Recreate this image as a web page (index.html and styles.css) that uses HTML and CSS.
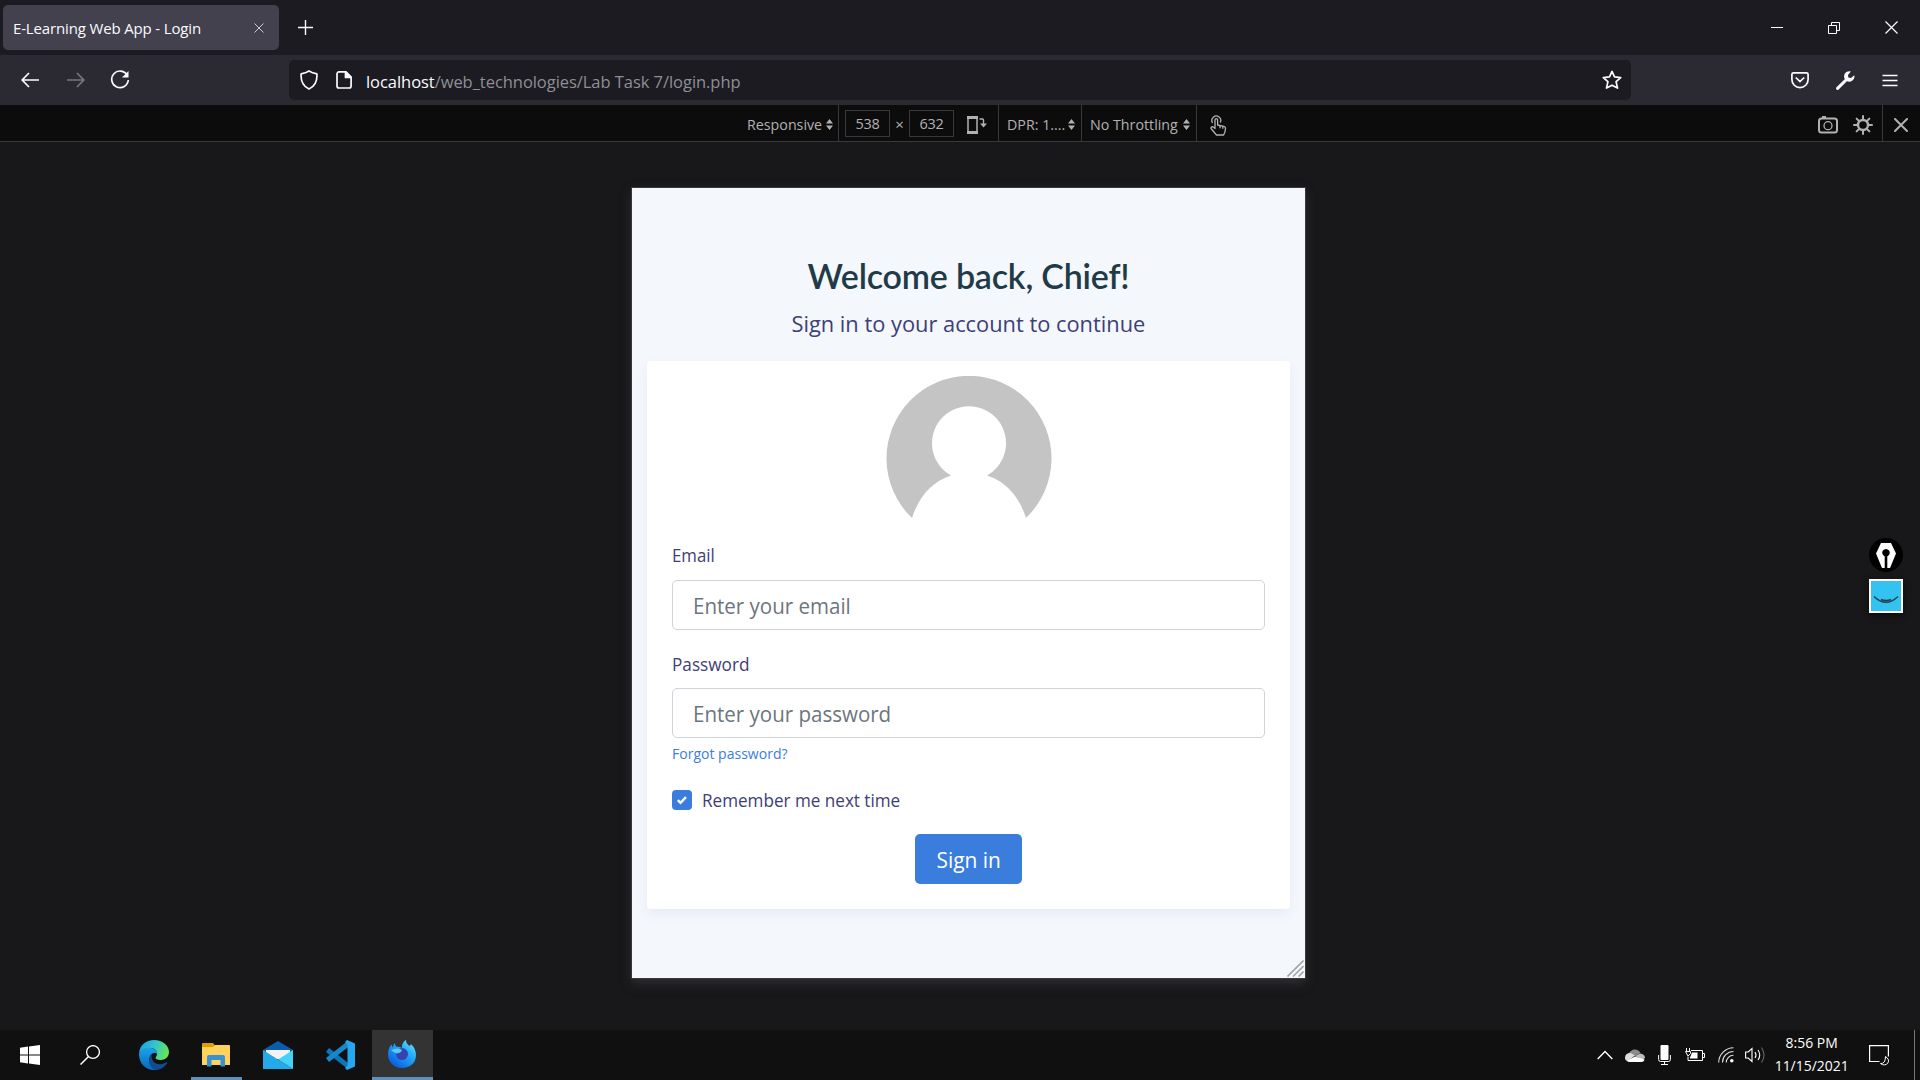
FILE: index.html
```html
<!DOCTYPE html>
<html lang="en">
<head>
<meta charset="utf-8">
<title>E-Learning Web App - Login</title>
<link rel="stylesheet" href="styles.css">
</head>
<body>
<div class="screen">
  <header class="tabbar">
    <div class="tab">
      <span>E-Learning Web App - Login</span>
      <svg width="10" height="10" viewBox="0 0 10 10" class="line"><path d="M.5.5l9 9M9.5.5l-9 9"/></svg>
    </div>
    <svg class="newtab line" width="15" height="15" viewBox="0 0 15 15"><path d="M7.5 0v15M0 7.5h15" stroke-width="1.4"/></svg>
    <div class="window-controls">
      <svg width="12" height="14" viewBox="0 0 12 14"><path d="M0 6h12v1H0z" fill="#fff"/></svg>
      <svg width="12" height="12" viewBox="0 0 12 12" class="line"><path d="M.5 3.500h8v8h-8zM3.500 3.500v-3h8v8h-3"/></svg>
      <svg width="13" height="13" viewBox="0 0 13 13" class="line"><path d="M.5.5l12 12M12.500.5l-12 12" stroke-width="1.200"/></svg>
    </div>
  </header>

  <nav class="navbar">
    <div class="history">
      <svg width="19" height="16" viewBox="0 0 19 16" class="line thick"><path d="M18 8H1.500M8 1L1.200 8 8 15"/></svg>
      <svg width="19" height="16" viewBox="0 0 19 16" class="line thick dim"><path d="M1 8h16.500M11 1l6.800 7L11 15"/></svg>
      <svg width="20" height="20" viewBox="0 0 20 20" class="line thick"><path d="M17.300 5.300A8.300 8.300 0 1 0 18.300 10"/><path d="M18.500 1v6.500H12z" fill="#fbfbfe" stroke="none"/></svg>
    </div>
    <div class="urlbar">
      <svg width="18" height="20" viewBox="0 0 18 20" class="line thick"><path d="M9 1C6.500 2.600 4 3.400 1.900 3.600Q1 3.700 1 4.600C.9 11 3 16.500 9 19c6-2.500 8.100-8 8-14.400q0-.9-.9-1C14 3.400 11.500 2.600 9 1z"/></svg>
      <svg width="16" height="18" viewBox="0 0 16 18" class="line thick"><path d="M3 .9h7L15.100 6v9a2 2 0 0 1-2 2H3a2 2 0 0 1-2-2V3A2 2 0 0 1 3 .9z"/><path d="M9.500 1v5.500H15z" fill="#fbfbfe"/></svg>
      <div class="url"><b>localhost</b>/web_technologies/Lab Task 7/login.php</div>
      <svg width="20" height="20" viewBox="0 0 20 20" class="line thick"><path d="M10 1.400l2.500 5.500 6.200.7-4.600 4.100 1.400 6.400L10 15.200l-5.500 2.900 1.400-6.400L1.300 7.600l6.200-.7z" stroke-linejoin="round"/></svg>
    </div>
    <div class="tools">
      <svg width="18" height="17" viewBox="0 0 18 17" class="line thick"><path d="M2.500.9h13q1.600 0 1.600 1.600V7.500a8.100 8.100 0 0 1-16.200 0V2.500Q.9.900 2.500.9zM4.800 5.500L9 9.500l4.200-4"/></svg>
      <svg width="19" height="19" viewBox="0 0 19 19"><path d="M1.600 17.400L10.500 8.500" stroke="#fbfbfe" stroke-width="3" stroke-linecap="round"/><path d="M14.800.5A5.200 5.200 0 1 0 18.300 4.200L15 7l-2.700-.5L12 4z" fill="#fbfbfe"/></svg>
      <svg width="16" height="13" viewBox="0 0 16 13" class="line thick"><path d="M.5 1.500h15M.5 6.500h15M.5 11.500h15" stroke-width="1.300"/></svg>
    </div>
  </nav>

  <div class="devbar">
    <div class="cell responsive"><span>Responsive</span><svg class="sort" width="7" height="11" viewBox="0 0 7 11"><path d="M0 4.500L3.500 0 7 4.500zM0 6.500L3.500 11 7 6.500z"/></svg></div>
    <div class="cell size">
      <div class="num">538</div><div class="times">×</div><div class="num">632</div>
      <svg width="20" height="18" viewBox="0 0 20 18"><path d="M1 1.500h9v15H1z" fill="none" stroke="#b1b1b3" stroke-width="1.500"/><path d="M0 0h11v3H0zM0 15h11v3H0z" fill="#b1b1b3"/><path d="M12.500 3h3q1 0 1 1v5" fill="none" stroke="#b1b1b3" stroke-width="1.400"/><path d="M13 7.500h7L16.500 11.500z" fill="#b1b1b3"/></svg>
    </div>
    <div class="cell dpr"><span>DPR: 1....</span><svg class="sort" width="7" height="11" viewBox="0 0 7 11"><path d="M0 4.500L3.500 0 7 4.500zM0 6.500L3.500 11 7 6.500z"/></svg></div>
    <div class="cell throttle"><span>No Throttling</span><svg class="sort" width="7" height="11" viewBox="0 0 7 11"><path d="M0 4.500L3.500 0 7 4.500zM0 6.500L3.500 11 7 6.500z"/></svg></div>
    <svg class="touch" width="17" height="21" viewBox="0 0 17 21"><g fill="none" stroke="#b1b1b3" stroke-width="1.300" stroke-linejoin="round"><path d="M5 12.500V5a1.300 1.300 0 0 1 2.600 0v5l6.200 1.400q1.800.4 1.700 2.200-.2 3.700-1.900 6.400H6.500L1.400 14q-.9-1.100.1-1.900 1-.7 2 .2L5 13.600zM10 10.500v2.800M12.800 11.200v2.500"/><path d="M2.600 7.800A4.400 4.400 0 1 1 10.200 7.500"/></g></svg>
    <div class="devright">
      <svg width="20" height="18" viewBox="0 0 20 18"><g fill="none" stroke="#b1b1b3"><rect x="1" y="2.500" width="18" height="14" rx="2.500" stroke-width="2"/><circle cx="10" cy="9.700" r="4" stroke-width="1.300"/></g><path d="M4 0h4v2H4z" fill="#b1b1b3"/></svg>
      <svg width="20" height="20" viewBox="0 0 20 20"><g stroke="#b1b1b3" stroke-width="2" fill="none" stroke-linecap="round"><circle cx="10" cy="10" r="5" stroke-width="2.400"/><path d="M10 1v3M10 16v3M1 10h3M16 10h3M3.600 3.600l2.200 2.200M14.200 14.200l2.200 2.200M3.600 16.400l2.200-2.200M14.200 5.800l2.200-2.200"/></g></svg>
      <div class="close"><svg width="14" height="14" viewBox="0 0 14 14"><path d="M1 1l12 12M13 1L1 13" stroke="#b1b1b3" stroke-width="2" stroke-linecap="round"/></svg></div>
    </div>
  </div>

  <main class="stage">
    <section class="viewport">
      <h1>Welcome back, Chief!</h1>
      <p class="lead"><span>Sign in to your account to continue</span></p>
      <form class="card">
        <svg class="avatar" width="166" height="165" viewBox="0 0 166 165"><path fill="#c4c4c4" d="M26 142A82.500 82.500 0 1 1 140 142C133 120 119 105 101 99.500A37 37 0 1 0 65 99.500C47 105 33 120 26 142z"/></svg>
        <label class="label email">Email</label>
        <div class="input"><span>Enter your email</span></div>
        <label class="label password">Password</label>
        <div class="input"><span>Enter your password</span></div>
        <a class="forgot">Forgot password?</a>
        <div class="remember">
          <span class="check"><svg width="12" height="10" viewBox="0 0 12 10"><path d="M1.800 5.200L4.500 7.800 10 2.200" fill="none" stroke="#fff" stroke-width="2.500"/></svg></span>
          <span class="remember-text">Remember me next time</span>
        </div>
        <div class="submit"><span>Sign in</span></div>
      </form>
      <svg class="grip" width="17" height="17" viewBox="0 0 17 17"><path d="M.5 16.500l16-16M6 16.500L16.500 6M11.500 16.500l5-5" stroke="#a3a5a6" stroke-width="1.600"/></svg>
    </section>
    <aside class="floaters">
      <svg width="34" height="34" viewBox="0 0 34 34"><circle cx="17" cy="17" r="17" fill="#000"/><path d="M12 5h10l5 10.500-6 14.500h-2.700V18.300a3.800 3.800 0 1 0-2.600 0V30H13L7 15.500z" fill="#fff"/></svg>
      <svg class="smile" width="34" height="34" viewBox="0 0 34 34"><path fill="#fff" d="M0 0h34v34H0z"/><path fill="#34c3f0" d="M2 2h30v30H2z"/><path d="M5 17.500q12 11.500 24 0M12 20.500q5 2 10 0" fill="none" stroke="#23434e" stroke-width="1.500"/></svg>
    </aside>
  </main>

  <footer class="taskbar">
    <div class="app"><svg width="20" height="20" viewBox="0 0 20 20"><path fill="#fff" d="M0 2.700l8-1.100v7.900H0zM9 1.500L20 0v9.500H9zM0 10.500h8v7.900l-8-1.100zM9 10.500h11V20L9 18.500z"/></svg></div>
    <div class="app search"><svg width="20" height="20" viewBox="0 0 20 20"><circle cx="13" cy="7" r="6.400" fill="none" stroke="#fff" stroke-width="1.300"/><path d="M8.500 11.500L.5 19.500" stroke="#fff" stroke-width="1.500"/></svg></div>
    <div class="app edge"><svg width="30" height="30" viewBox="0 0 30 30">
      <defs><linearGradient id="eg" x1="0" x2="1" y1=".2" y2=".5"><stop stop-color="#1ba2dd"/><stop offset=".5" stop-color="#33c4d0"/><stop offset="1" stop-color="#67e552"/></linearGradient><linearGradient id="eb" x2="0" y2="1"><stop stop-color="#1ba4e8"/><stop offset="1" stop-color="#0967bb"/></linearGradient></defs>
      <path fill="url(#eg)" d="M0 13C1 5 7 0 15 0c9 0 15 6 15 12 0 5-4 8-8 8-3.500 0-6-1-5.300-2.500C19 15 19 8 11 8 5 8 1 11 0 13z"/>
      <path fill="url(#eb)" d="M0 14.500C0 10 5 7.700 9.500 7.700c5 0 8.700 2.500 9 6C14 11.500 10 15 10.500 20c.4 5 4 9 7 9.700C8 31.500 0 24 0 14.500z"/>
      <path fill="#114c91" d="M13 14.500c-2 7.500 6 12.500 14.500 7.800.6-.3 1 .2.700.7C25.500 27.500 21 30 16.500 30 10 28 7.500 18.500 13 14.500z"/></svg></div>
    <div class="app explorer running"><svg width="28" height="24" viewBox="0 0 28 24"><path fill="#dea000" d="M0 1q0-1 1-1h10l2 2.500V7H0z"/><path fill="#ffd35b" d="M0 4h11l2-2h14q1 0 1 1v18.500q0 .5-.5.500H.500Q0 22 0 21.500z"/><path fill="#3a91d1" d="M5 23.500V14q0-2 2-2h14q2 0 2 2v9.500h-4.500V17h-9v6.500z"/></svg></div>
    <div class="app mail"><svg width="30" height="28" viewBox="0 0 30 28"><path fill="#0d5bac" d="M0 9L15 0l15 9v5H0z"/><path fill="#f3f3f3" d="M3 9h24v9H3z"/><path fill="#24aae8" d="M0 9l15 9.500L30 28H0z"/><path fill="#45d2f9" d="M30 9L15 18.500 30 28z"/></svg></div>
    <div class="app code"><svg width="30" height="30" viewBox="0 0 30 30"><path fill="none" stroke="#0f75b8" stroke-width="5" d="M23 26L2.500 10"/><path fill="none" stroke="#1587cd" stroke-width="5" d="M23 4L2.500 20"/><path fill="#26a6ee" d="M22 0l8 3.500v23L22 30l-2-2 2.500-2.500v-21L20 2z"/></svg></div>
    <div class="app firefox running active"><svg width="28" height="28" viewBox="0 0 28 28">
      <defs><linearGradient id="fx" x1="1" y1="0" x2=".2" y2="1"><stop stop-color="#80efff"/><stop offset=".4" stop-color="#25adfa"/><stop offset="1" stop-color="#0757dd"/></linearGradient></defs>
      <path fill="url(#fx)" d="M3.500 4.500l1 3 2-4.500 1.500 3.500q4 0 6 1.500C13.500 4 16 1 18 0q0 4 4 6l1-2q5 5 5 11C28 23 22 28 14 28S0 22 0 14.500Q0 8.500 3.500 4.500z"/><circle cx="14" cy="14" r="6" fill="#3642b0"/><path fill="#55cafa" d="M3 10q7-3 11 0-1 3-5 3.500Q6 13 3 10z"/></svg></div>

    <div class="tray">
      <svg class="t-up" width="16" height="10" viewBox="0 0 16 10"><path d="M.7 9L8 1.500 15.300 9" fill="none" stroke="#fff" stroke-width="1.400"/></svg>
      <svg class="t-cloud" width="20" height="13" viewBox="0 0 20 13"><path fill="#8b8b8b" d="M3 6C5-.5 13-1.500 15.500 4l-6 3z"/><path fill="#bcbcbc" d="M10 7l5-2.500q5 .5 5 4.500l-3 2z"/><path fill="#dedede" d="M0 9q0-5 5.500-5L10 6.500 3 12Q0 11.500 0 9z"/><path fill="#fff" d="M1.500 12L10 7.500l9.500 3Q19 13 16 13H4z"/></svg>
      <svg class="t-mic" width="13" height="20" viewBox="0 0 13 20"><rect x="2.500" width="8" height="15" rx="1" fill="#fff"/><path d="M.6 10v4.500q0 2 2 2h7.800q2 0 2-2V10M6.500 16.500v3M3 19.500h7" fill="none" stroke="#fff"/></svg>
      <svg class="t-batt" width="20" height="14" viewBox="0 0 20 14"><path d="M6 2.500h11.500v10H3V8.500M17.500 5.500h2v4h-2M1.500 0v3M4.500 0v3M.5 3.500h5v2L3 8z" fill="none" stroke="#fff"/><path fill="#fff" d="M5 9.500L7 4.500h5.500v6H5z"/></svg>
      <svg class="t-wifi" width="16" height="16" viewBox="0 0 16 16"><g fill="none" stroke="#ddd" stroke-width="1.100"><path d="M.7 15.500A15 15 0 0 1 15.500.7M4.500 15.500A11 11 0 0 1 15.500 4.500M8.300 15.500A7.200 7.200 0 0 1 15.500 8.300"/></g><circle cx="13.800" cy="13.800" r="1.800" fill="#fff"/></svg>
      <svg class="t-vol" width="20" height="18" viewBox="0 0 20 18"><g fill="none" stroke="#fff" stroke-width="1.100"><path d="M.6 6h2.600L7 2.500v13L3.200 12H.6zM10 6q2 3 0 6M13 4q3.500 5 0 10"/><path d="M16.500 1.500q5 7.500 0 15" stroke="#666"/></g></svg>
      <div class="clock"><div>8:56 PM</div><div>11/15/2021</div></div>
      <svg class="t-note" width="20" height="21" viewBox="0 0 20 21"><path d="M10.500 16.500H.6V.6h18.800v11" fill="none" stroke="#fff" stroke-width="1.200"/><path d="M16.500 11.500q4.500 3 2.400 6.500-3 3.500-7.400.6 5 .2 5-7.100z" fill="#111" stroke="#fff"/></svg>
      <div class="peek"></div>
    </div>
  </footer>
</div>
</body>
</html>
```
FILE: styles.css
```css
* { box-sizing: border-box; }
body { margin: 0; background: #18181a; font-family: "Open Sans", sans-serif; }
svg { display: block; flex: none; }
.screen { width: 1920px; height: 1080px; display: flex; flex-direction: column; overflow: hidden; }
.line { fill: none; stroke: #fbfbfe; stroke-width: 1; }
.thick { stroke-width: 1.7; }
.dim { stroke: #77767e; }

/* Tabs */
.tabbar { height: 55px; background: #1c1b22; display: flex; align-items: center; padding-left: 3px; }
.tab { width: 276px; height: 45px; border-radius: 5px; background: #42414d; color: #fbfbfe; display: flex; align-items: center; justify-content: space-between; padding: 0 15px 0 10px; font-size: 15px; letter-spacing: -.15px; }
.tab span { padding-top: 1px; }
.tab svg { stroke: #c9c9cf; }
.newtab { margin-left: 19px; }
.window-controls { margin-left: auto; display: flex; align-items: center; gap: 45px; padding-right: 22px; }

/* Navigation */
.navbar { height: 50px; background: #2b2a33; display: flex; align-items: center; }
.history { width: 289px; display: flex; align-items: center; gap: 26px; padding-left: 21px; }
.history svg:last-child { margin-left: -1px; }
.urlbar { width: 1342px; height: 40px; border-radius: 5px; background: #1c1b22; display: flex; align-items: center; padding: 0 9px 0 11px; }
.urlbar svg:nth-child(2) { margin-left: 18px; }
.url { flex: 1; padding: 2px 0 0 14px; font-size: 16.5px; letter-spacing: -.05px; color: #8f8f94; white-space: pre; }
.url b { font-weight: 400; color: #fbfbfe; }
.tools { flex: 1; display: flex; align-items: center; justify-content: flex-end; gap: 27px; padding-right: 22px; }

/* Responsive design toolbar */
.devbar { height: 37px; background: #0c0c0d; border-bottom: 1px solid #38383d; display: flex; align-items: stretch; padding-left: 747px; color: #b1b1b3; font-size: 15px; }
.cell { display: flex; align-items: center; border-right: 1px solid #38383d; white-space: nowrap; }
.cell > span { margin-top: 1px; transform: scaleX(.95); transform-origin: left; }
.sort { fill: #b1b1b3; margin: 2px 0 0 auto; }
.responsive { width: 92px; padding-right: 6px; }
.size { width: 160px; padding: 1px 0 0 6px; }
.num { width: 45px; height: 27px; border: 1px solid #38383d; text-align: center; font-size: 14.5px; line-height: 26px; letter-spacing: -.3px; }
.times { width: 19px; text-align: center; padding-top: 1px; }
.size svg { margin: 2px 0 0 13px; }
.dpr { width: 83px; padding: 0 7px 0 8px; }
.throttle { width: 115px; padding: 0 6px 0 8px; }
.touch { margin: 10px 0 0 13px; }
.devright { margin-left: auto; display: flex; align-items: center; }
.devright > svg { margin-top: 3px; }
.devright > svg + svg { margin-left: 15px; }
.close { align-self: stretch; width: 38px; margin-left: 9px; border-left: 1px solid #38383d; display: flex; align-items: center; padding: 3px 0 0 11px; }

/* Simulated page */
.stage { flex: 1; display: flex; align-items: flex-start; padding: 46px 17px 0 632px; }
.viewport { position: relative; width: 673px; height: 790px; background: #f4f7fc; outline: 1px solid #38383d; box-shadow: 0 5px 10px #303033; padding: 66px 15px 0; }
.viewport h1 { margin: 0; font: 600 34px/44px Lato, sans-serif; color: #1f3b48; text-align: center; letter-spacing: -.2px; }
.lead { margin: 11px 0 0; height: 52px; line-height: 30px; font-size: 22.5px; text-align: center; color: #3d4076; }
.lead span { display: inline-block; transform: scaleX(.97); }
.card { height: 548px; border-radius: 4px; background: #fff; box-shadow: 0 5px 12px rgba(65, 80, 160, .07); padding: 15px 25px 0; color: #3d4076; }
.avatar { margin: 0 auto; }
.label { display: block; height: 26px; font-size: 18px; line-height: 26px; transform-origin: left; }
.email { margin: 1px 0 12px; transform: scaleX(.935); }
.password { margin: 21px 0 11px; transform: scaleX(.955); }
.input { height: 50px; border: 1px solid #ced4da; border-radius: 5px; padding-left: 20px; color: #6c757d; font-size: 22.5px; line-height: 49px; }
.input span { display: inline-block; transform: scaleX(.912); transform-origin: left; }
.forgot { display: block; margin-top: 4px; height: 22px; line-height: 22px; font-size: 15px; color: #3b7ddd; transform: scaleX(.935); transform-origin: left; }
.remember { margin-top: 24px; height: 24px; display: flex; align-items: center; gap: 10px; font-size: 18px; line-height: 24px; }
.check { width: 20px; height: 20px; border-radius: 4px; background: #3b7ddd; display: flex; align-items: center; justify-content: center; }
.remember-text { transform: scaleX(.95); transform-origin: left; }
.submit { width: 107px; height: 50px; margin: 22px auto 0; border-radius: 5px; background: #3b7ddd; color: #fff; font-size: 22.5px; line-height: 52px; text-align: center; }
.submit span { display: inline-block; transform: scaleX(.93); }
.grip { position: absolute; right: 1px; bottom: 1px; }
.floaters { margin: 350px 0 0 auto; display: grid; gap: 7px; }
.smile { box-shadow: 0 2px 6px #0c0c0d; }

/* Windows taskbar */
.taskbar { height: 50px; background: #101010; display: flex; }
.app { width: 60px; display: flex; align-items: center; justify-content: center; }
.search { margin-left: 0; }
.edge { margin-left: 4px; }
.explorer { width: 51px; margin-left: 7px; padding-right: 1px; }
.mail { margin-left: 6px; }
.code { margin-left: 2px; }
.firefox { width: 61px; margin-left: 2px; padding-right: 1px; }
.running { border-bottom: 3px solid #5a91bf; padding-top: 3px; }
.active { background: #333; padding-top: 0; }
.tray { margin-left: auto; display: flex; align-items: center; }
.t-cloud { margin-left: 12px; }
.t-mic { margin-left: 13px; }
.t-batt { margin-left: 14px; }
.t-wifi { margin-left: 13px; }
.t-vol { margin-left: 11px; }
.clock { width: 98px; color: #fff; font-size: 15px; line-height: 23px; text-align: center; transform: scaleX(.93); padding: 0 5px 2px 0; }
.t-note { margin-left: 6px; }
.peek { width: 6px; align-self: stretch; margin-left: 25px; border-left: 1px solid #777; }
```
